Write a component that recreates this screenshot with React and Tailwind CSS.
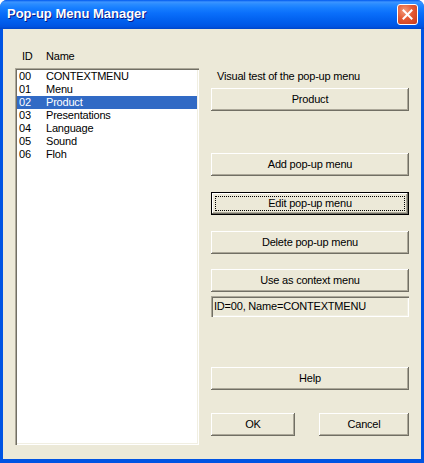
const MENUS = [
  { id: '00', name: 'CONTEXTMENU' },
  { id: '01', name: 'Menu' },
  { id: '02', name: 'Product' },
  { id: '03', name: 'Presentations' },
  { id: '04', name: 'Language' },
  { id: '05', name: 'Sound' },
  { id: '06', name: 'Floh' },
]

function Button({ children, isDefault, className = '' }) {
  if (isDefault) {
    return (
      <div className={`h-[23px] border border-black ${className}`}>
        <div className="h-full p-[3px] bg-[#ece9d8] shadow-[inset_-1px_-1px_#716f64,inset_1px_1px_#fff,inset_-2px_-2px_#aca899]">
          <div className="h-full flex items-center justify-center border border-dotted border-black">
            {children}
          </div>
        </div>
      </div>
    )
  }
  return (
    <div className={`h-[23px] flex items-center justify-center bg-[#ece9d8] shadow-[inset_-1px_-1px_#716f64,inset_1px_1px_#fff,inset_-2px_-2px_#aca899] ${className}`}>
      {children}
    </div>
  )
}

export default function App() {
  const selected = '02'

  return (
    <div className="w-[424px] h-[463px] flex flex-col bg-[#0054e3] rounded-t-[7px] overflow-hidden font-['Liberation_Sans',Arial,sans-serif] text-[11px] tracking-[-0.2px] text-black">
      {/* Title bar */}
      <div className="h-[29px] shrink-0 flex items-center px-[7px] bg-[linear-gradient(to_bottom,#0058ee_0%,#3d95ff_7%,#2a8cff_14%,#167eff_28%,#0a6ffb_45%,#0363f1_65%,#005ae9_82%,#0053e1_92%,#0046c8_100%)]">
        <span className="flex-1 text-white font-bold text-[13px] tracking-normal [text-shadow:1px_1px_#0a1883] pb-[1px]">
          Pop-up Menu Manager
        </span>
        <div className="w-[21px] h-[21px] mr-[-1px] rounded-[3px] border border-white flex items-center justify-center bg-[radial-gradient(circle_at_35%_30%,#f39c7c_0%,#e45a34_45%,#c8391a_100%)]">
          <svg width="11" height="11" viewBox="0 0 11 11">
            <path d="M1.5 1.5 L9.5 9.5 M9.5 1.5 L1.5 9.5" stroke="#fff" strokeWidth="2" strokeLinecap="square" />
          </svg>
        </div>
      </div>

      {/* Client area */}
      <div className="flex-1 flex mx-[3px] mb-[4px] bg-[#ece9d8]">
        {/* Left: list of menus */}
        <div className="flex flex-col pl-[12px] pt-[21px]">
          <div className="h-[13px] leading-[13px] flex">
            <span className="w-[31px] pl-[7px]">ID</span>
            <span>Name</span>
          </div>
          <div className="mt-[5px] w-[184px] h-[377px] bg-white p-[2px] shadow-[inset_1px_1px_#aca899,inset_2px_2px_#716f64,inset_-1px_-1px_#fff,inset_-2px_-2px_#f1efe2]">
            {MENUS.map(m => (
              <div key={m.id}
                className={`h-[13px] leading-[13px] flex ${m.id === selected ? 'bg-[#316ac5] text-white' : ''}`}>
                <span className="w-[29px] pl-[2px]">{m.id}</span>
                <span>{m.name}</span>
              </div>
            ))}
          </div>
        </div>

        {/* Right: actions */}
        <div className="flex flex-col ml-[12px] w-[198px] pt-[41px]">
          <div className="h-[13px] leading-[13px] pl-[6px]">Visual test of the pop-up menu</div>
          <Button className="mt-[5px]">Product</Button>
          <Button className="mt-[42px]">Add pop-up menu</Button>
          <Button className="mt-[16px]" isDefault>Edit pop-up menu</Button>
          <Button className="mt-[16px]">Delete pop-up menu</Button>
          <Button className="mt-[15px]">Use as context menu</Button>
          <div className="mt-[4px] h-[21px] flex items-center px-[3px] bg-[#ece9d8] shadow-[inset_1px_1px_#aca899,inset_2px_2px_#716f64,inset_-1px_-1px_#fff,inset_-2px_-2px_#f1efe2]">
            ID=00, Name=CONTEXTMENU
          </div>
          <Button className="mt-[50px]">Help</Button>
          <div className="mt-[23px] flex justify-between">
            <Button className="w-[84px]">OK</Button>
            <Button className="w-[90px]">Cancel</Button>
          </div>
        </div>
      </div>
    </div>
  )
}
